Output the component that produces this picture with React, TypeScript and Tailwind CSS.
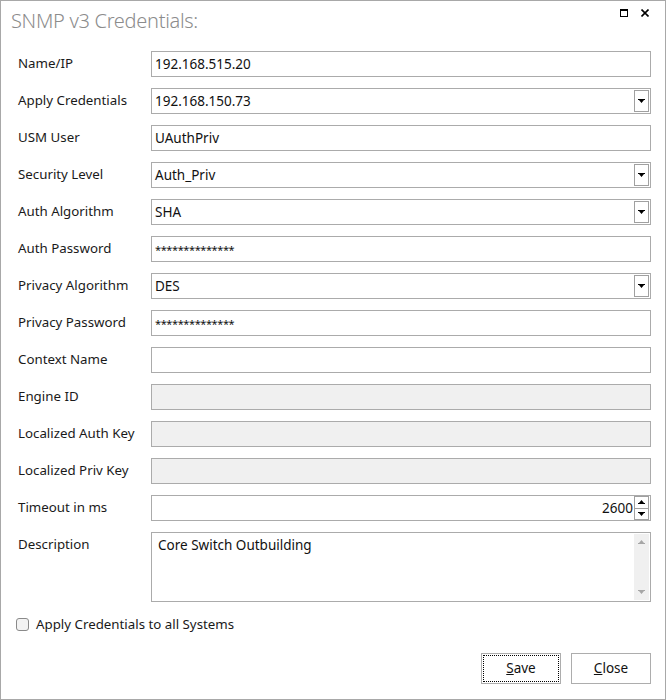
import React from "react";

const font = { fontFamily: '"Noto Sans", "Open Sans", sans-serif' };

function Arrow({ up = false, color = "#000" }: { up?: boolean; color?: string }) {
  return (
    <svg width="7" height="4" viewBox="0 0 7 4" style={{ transform: up ? "rotate(180deg)" : undefined }}>
      <path d="M0 0h7v1H0z M1 1h5L3.5 4z" fill={color} />
    </svg>
  );
}

function TextBox({ value, disabled = false, mono = false }: { value?: string; disabled?: boolean; mono?: boolean }) {
  return (
    <div
      className={`h-[26px] border border-[#ababab] flex items-center pl-[3px] text-[13.5px] text-[#111] ${
        disabled ? "bg-[#f0f0f0]" : "bg-white"
      }`}
    >
      <span className={mono ? "text-[11px] tracking-[-0.4px] pt-[2px]" : ""}>{value}</span>
    </div>
  );
}

function Combo({ value }: { value: string }) {
  return (
    <div className="h-[26px] border border-[#ababab] bg-white flex items-stretch p-[1px] pr-[1px] text-[13.5px] text-[#111]">
      <div className="flex-1 flex items-center pl-[2px]">{value}</div>
      <div className="w-[15px] border border-[#a0a0a0] flex items-center justify-center">
        <Arrow />
      </div>
    </div>
  );
}

function Spinner({ value }: { value: string }) {
  return (
    <div className="h-[26px] border border-[#ababab] bg-white flex items-stretch pr-[1px] text-[13.5px] text-[#111]">
      <div className="flex-1 flex items-center justify-end pr-[1px]">{value}</div>
      <div className="w-[15px] flex flex-col py-0">
        <div className="flex-1 border border-[#a0a0a0] flex items-center justify-center">
          <Arrow up />
        </div>
        <div className="flex-1 border border-t-0 border-[#a0a0a0] flex items-center justify-center">
          <Arrow />
        </div>
      </div>
    </div>
  );
}

function Label({ text }: { text: string }) {
  return <div className="h-[26px] flex items-center text-[13.3px] text-[#1a1a1a]">{text}</div>;
}

export default function App() {
  const rows: [string, React.ReactNode][] = [
    ["Name/IP", <TextBox value="192.168.515.20" />],
    ["Apply Credentials", <Combo value="192.168.150.73" />],
    ["USM User", <TextBox value="UAuthPriv" />],
    ["Security Level", <Combo value="Auth_Priv" />],
    ["Auth Algorithm", <Combo value="SHA" />],
    ["Auth Password", <TextBox value="**************" mono />],
    ["Privacy Algorithm", <Combo value="DES" />],
    ["Privacy Password", <TextBox value="**************" mono />],
    ["Context Name", <TextBox value="" />],
    ["Engine ID", <TextBox disabled />],
    ["Localized Auth Key", <TextBox disabled />],
    ["Localized Priv Key", <TextBox disabled />],
    ["Timeout in ms", <Spinner value="2600" />],
  ];

  return (
    <div style={font} className="w-[666px] h-[700px] bg-white border border-[#a8a8a8] flex flex-col">
      <div className="h-[50px] flex items-start justify-between">
        <div className="pl-[10px] pt-[5px] text-[20px] text-[#8c8c8c] font-light tracking-[-0.3px]">
          SNMP v3 Credentials:
        </div>
        <div className="flex items-center gap-[13px] pt-[8px] pr-[16px]">
          <svg width="8" height="8" viewBox="0 0 8 8">
            <rect x="0.5" y="0.5" width="7" height="7" fill="none" stroke="#000" />
            <rect x="0" y="0" width="8" height="2" fill="#000" />
          </svg>
          <svg width="8" height="8" viewBox="0 0 8 8">
            <path d="M0.5 0.5L7.5 7.5M7.5 0.5L0.5 7.5" stroke="#000" strokeWidth="1.6" />
          </svg>
        </div>
      </div>

      <div className="grid grid-cols-[133px_500px] gap-y-[11px] pl-[17px]">
        {rows.map(([l, c]) => (
          <React.Fragment key={l}>
            <Label text={l} />
            {c}
          </React.Fragment>
        ))}
        <div className="h-[70px] pt-[3px] text-[13.3px] text-[#1a1a1a]">Description</div>
        <div className="h-[70px] border border-[#ababab] bg-white flex items-stretch pr-[1px] pt-[1px] pb-[1px]">
          <div className="flex-1 pl-[6px] pt-[1px] text-[13.5px] text-[#111]">Core Switch Outbuilding</div>
          <div className="w-[15px] bg-[#f0f0f0] flex flex-col justify-between items-center py-[6px]">
            <Arrow up color="#a6a6a6" />
            <Arrow color="#a6a6a6" />
          </div>
        </div>
      </div>

      <div className="flex items-center gap-[7px] pl-[15px] mt-[13px]">
        <div className="w-[13px] h-[13px] rounded-[3px] border border-[#8a8a8a] bg-[#f3f3f3]" />
        <span className="text-[13.3px] text-[#1a1a1a]">Apply Credentials to all Systems</span>
      </div>

      <div className="flex justify-end gap-[10px] pr-[14px] mt-[18px]">
        <div className="w-[80px] h-[31px] border border-[#adadad] p-[1px]">
          <div className="w-full h-full border border-dotted border-[#000] flex items-center justify-center text-[13.5px] text-[#111]">
            <span>
              <span className="underline">S</span>ave
            </span>
          </div>
        </div>
        <div className="w-[80px] h-[31px] border border-[#adadad] flex items-center justify-center text-[13.5px] text-[#111]">
          <span>
            <span className="underline">C</span>lose
          </span>
        </div>
      </div>
    </div>
  );
}
